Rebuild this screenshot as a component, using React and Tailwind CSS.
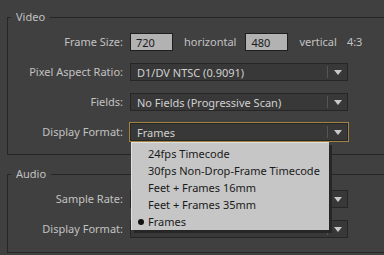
import React from "react";

const font = { fontFamily: '"Noto Sans", "Open Sans", sans-serif' };

function Arrow() {
  return (
    <div className="flex items-center h-full">
      <div className="w-px h-[12px] bg-[#222222] border-r border-[#555555]" />
      <div className="w-[19px] flex justify-center">
        <svg width="8" height="5" viewBox="0 0 8 5">
          <path d="M0 0 H8 L4 5 Z" fill="#c8c8c8" />
        </svg>
      </div>
    </div>
  );
}

function Select({ value, focused }) {
  return (
    <div
      className={`w-[218px] h-[18px] flex items-center justify-between border border-[#262626] bg-[#383838] ${
        focused ? "outline outline-1 outline-[#a08440]" : ""
      }`}
    >
      <span className="pl-[6px] text-[11px] leading-none text-[#d0d0d0] whitespace-nowrap">{value}</span>
      <Arrow />
    </div>
  );
}

function Row({ label, children }) {
  return (
    <div className="flex items-center h-[18px]">
      <div className="w-[115px] text-right text-[11px] text-[#c2c2c2] whitespace-nowrap">{label}</div>
      <div className="ml-[7px] flex items-center">{children}</div>
    </div>
  );
}

function Group({ title, children, className }) {
  return (
    <div className={`relative ml-[7px] w-[400px] border border-[#262626] ${className}`}>
      <span className="absolute -top-[9px] left-[3px] px-[5px] bg-[#404040] text-[11px] leading-[16px] text-[#c2c2c2]">
        {title}
      </span>
      <div className="pt-[15px] flex flex-col gap-[12px]">{children}</div>
    </div>
  );
}

function NumInput({ value }) {
  return (
    <div className="w-[43px] h-[18px] border border-[#1e1e1e] bg-[#b2b2b2] pl-[5px] flex items-center text-[11px] leading-none text-[#1a1a1a]">
      {value}
    </div>
  );
}

const items = ["24fps Timecode", "30fps Non-Drop-Frame Timecode", "Feet + Frames 16mm", "Feet + Frames 35mm", "Frames"];

export default function App() {
  return (
    <div className="relative w-[384px] h-[255px] bg-[#404040] overflow-hidden pt-[17px]" style={font}>
      <Group title="Video" className="h-[138px]">
        <Row label="Frame Size:">
          <NumInput value="720" />
          <span className="ml-[11px] text-[11px] text-[#c2c2c2]">horizontal</span>
          <div className="ml-[9px]">
            <NumInput value="480" />
          </div>
          <span className="ml-[11px] text-[11px] text-[#c2c2c2]">vertical</span>
          <span className="ml-[10px] text-[11px] text-[#c2c2c2]">4:3</span>
        </Row>
        <Row label="Pixel Aspect Ratio:">
          <Select value="D1/DV NTSC (0.9091)" />
        </Row>
        <Row label="Fields:">
          <Select value="No Fields (Progressive Scan)" />
        </Row>
        <Row label="Display Format:">
          <Select value="Frames" focused />
        </Row>
      </Group>

      <Group title="Audio" className="mt-[19px] h-[79px]">
        <Row label="Sample Rate:">
          <Select value="" />
        </Row>
        <Row label="Display Format:">
          <Select value="" />
        </Row>
      </Group>

      {/* open dropdown list */}
      <div className="absolute left-[131px] top-[142px] w-[198px] h-[88px] bg-[#c6c6c6] border-t border-l border-[#e0e0e0] shadow-[3px_3px_0_#262626] pt-[2px]">
        {items.map((it) => (
          <div key={it} className="relative h-[17px] flex items-center pl-[16px] text-[11px] leading-none text-[#1a1a1a] whitespace-nowrap">
            {it === "Frames" && <span className="absolute left-[6px] w-[6px] h-[6px] rounded-full bg-[#111111]" />}
            {it}
          </div>
        ))}
      </div>
    </div>
  );
}
